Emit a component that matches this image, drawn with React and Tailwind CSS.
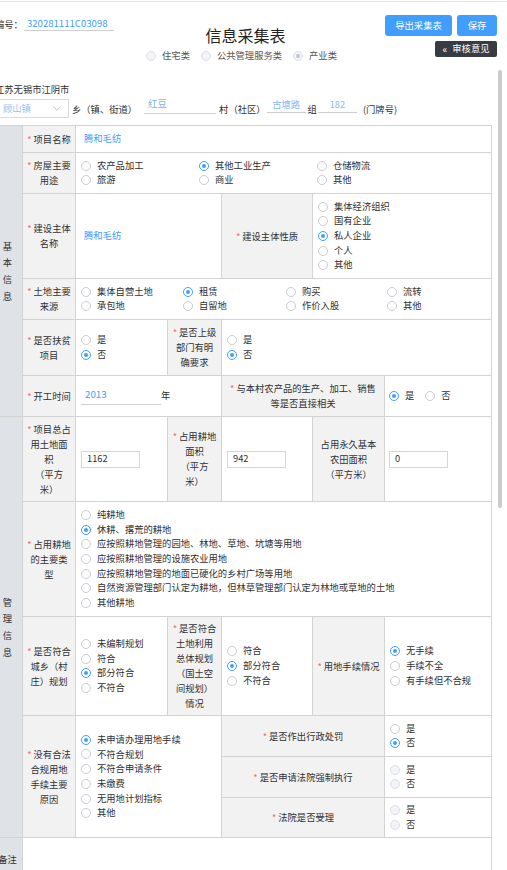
import React from "react";

const B = "border border-[#d3d3d3]";

function Radio({ checked = false, disabled = false, children, className = "" }) {
  let circle;
  if (disabled) {
    circle = "border-[#dcdfe6] bg-[#f2f4f7]";
  } else if (checked) {
    circle = "border-[#409eff] bg-white";
  } else {
    circle = "border-[#c8ccd3] bg-white";
  }
  return (
    <div className={"flex items-center h-[14.7px] whitespace-nowrap " + className}>
      <span className={"w-[10px] h-[10px] rounded-full border flex items-center justify-center shrink-0 " + circle}>
        {checked && (
          <span className={disabled ? "w-[4px] h-[4px] rounded-full bg-[#c0c4cc]" : "w-[4px] h-[4px] rounded-full bg-[#409eff]"} />
        )}
      </span>
      <span className="ml-[6px]">{children}</span>
    </div>
  );
}

const Req = () => <span className="text-[#f56c6c] mr-[2px]">*</span>;

function L({ lines, req = true, colSpan, rowSpan }) {
  return (
    <td
      colSpan={colSpan}
      rowSpan={rowSpan}
      className={B + " bg-[#f2f2f2] text-center align-middle leading-[15px] px-[2px] whitespace-nowrap"}
    >
      {lines.map((l, i) => (
        <div key={i}>
          {i === 0 && req && <Req />}
          {l}
        </div>
      ))}
    </td>
  );
}

function Opts({ items, colSpan, rowSpan, disabled = false }) {
  return (
    <td colSpan={colSpan} rowSpan={rowSpan} className={B + " align-middle pl-[5px] py-[2px]"}>
      {items.map(([t, c], i) => (
        <Radio key={i} checked={c} disabled={disabled}>
          {t}
        </Radio>
      ))}
    </td>
  );
}

function Section({ chars, rowSpan }) {
  return (
    <td rowSpan={rowSpan} className={B + " bg-[#dfe3e8] text-center align-middle"}>
      <div className="flex flex-col items-center leading-[16.7px]">
        {chars.map((c, i) => (
          <div key={i}>{c}</div>
        ))}
      </div>
    </td>
  );
}

function Box({ value }) {
  return (
    <div className="w-[59px] h-[17px] border border-[#d3d6dc] bg-white flex items-center pl-[5px] text-[#303133]">
      {value}
    </div>
  );
}

export default function App() {
  return (
    <div className="relative w-[507px] h-[870px] overflow-hidden bg-white font-['Noto_Sans_CJK_SC','Noto_Sans',sans-serif] text-[9.3px] text-[#303133]">
      <div className="mt-[1px] border-t border-[#e6e6e6]" />
      <div className="ml-[-8px]">
        {/* header */}
        <div className="flex w-[505px] h-[69px]">
          <div className="w-[130px] pt-[15px] pl-[3px] flex items-start">
            <span className="leading-[14px]">编号：</span>
            <span className="inline-block w-[90px] ml-[1px] pl-[3px] border-b border-[#cfcfcf] leading-[13px] text-[#409eff] text-[9.6px]">
              320281111C03098
            </span>
          </div>
          <div className="flex-1 flex flex-col items-center pt-[23px]">
            <div className="text-[16px] leading-[21px] text-[#222]">信息采集表</div>
            <div className="flex items-center mt-[3px] mr-[8px] text-[#555]">
              <Radio disabled className="mr-[11px]">住宅类</Radio>
              <Radio disabled className="mr-[11px]">公共管理服务类</Radio>
              <Radio disabled checked>产业类</Radio>
            </div>
          </div>
          <div className="w-[128px] flex flex-col items-end pt-[13px]">
            <div className="flex gap-[5px]">
              <div className="w-[67px] h-[21px] rounded-[3px] bg-[#409eff] text-white flex items-center justify-center">导出采集表</div>
              <div className="w-[40px] h-[21px] rounded-[3px] bg-[#409eff] text-white flex items-center justify-center">保存</div>
            </div>
            <div className="mt-[5px] w-[62px] h-[16px] rounded-[2px] bg-[#373b42] text-white flex items-center justify-center">
              <span className="mr-[5px] text-[10px] leading-none">«</span>审核意见
            </div>
          </div>
        </div>

        <div className="mt-[11px] pl-[3px] leading-[14px]">江苏无锡市江阴市</div>

        <div className="mt-[3px] flex items-center h-[19px]">
          <div className="w-[77px] h-[19px] border border-[#d6d9de] flex items-center justify-between pl-[10px] pr-[6px] text-[#9bbff0]">
            <span>顾山镇</span>
            <svg width="8" height="5" viewBox="0 0 8 5" className="mr-[1px]">
              <polyline points="0.5,0.5 4,4.3 7.5,0.5" fill="none" stroke="#b8bcc4" strokeWidth="0.9" />
            </svg>
          </div>
          <span className="ml-[3px] mt-[2px]">乡（镇、街道）</span>
          <div className="ml-[7px] w-[72px] h-[17px] border-b border-[#cfcfcf] pl-[4px] text-[#7fb0f0] leading-[13px] self-start mt-[-2px]">
            红豆
          </div>
          <span className="ml-[3px] mt-[2px]">村（社区）</span>
          <div className="ml-[1px] w-[39px] h-[14px] border-b border-[#cfcfcf] text-center text-[#8ab7f2] leading-[11px] self-start">
            古塘路
          </div>
          <span className="ml-[2px] mt-[2px]">组</span>
          <div className="ml-[1px] w-[39px] h-[14px] border-b border-[#cfcfcf] text-center text-[#8ab7f2] leading-[11px] self-start">
            182
          </div>
          <span className="ml-[6px] mt-[2px]">(门牌号)</span>
        </div>

        {/* table */}
        <table className="mt-[7px] table-fixed border-collapse w-[499px]">
          <colgroup>
            <col className="w-[30px]" />
            <col className="w-[53px]" />
            <col className="w-[92px]" />
            <col className="w-[54px]" />
            <col className="w-[91px]" />
            <col className="w-[72px]" />
            <col className="w-[107px]" />
          </colgroup>
          <tbody>
            <tr className="h-[27px]">
              <Section chars={["基", "本", "信", "息"]} rowSpan={6} />
              <L lines={["项目名称"]} />
              <td colSpan={5} className={B + " pl-[8px] text-[#409eff] align-middle"}>腾和毛纺</td>
            </tr>
            <tr className="h-[41px]">
              <L lines={["房屋主要", "用途"]} />
              <td colSpan={5} className={B + " pl-[5px] align-middle"}>
                <div className="grid grid-cols-[118px_118px_118px]">
                  <Radio>农产品加工</Radio>
                  <Radio checked>其他工业生产</Radio>
                  <Radio>仓储物流</Radio>
                  <Radio>旅游</Radio>
                  <Radio>商业</Radio>
                  <Radio>其他</Radio>
                </div>
              </td>
            </tr>
            <tr className="h-[85px]">
              <L lines={["建设主体", "名称"]} />
              <td colSpan={2} className={B + " pl-[8px] text-[#409eff] align-middle"}>腾和毛纺</td>
              <L lines={["建设主体性质"]} />
              <Opts
                colSpan={2}
                items={[
                  ["集体经济组织"],
                  ["国有企业"],
                  ["私人企业", true],
                  ["个人"],
                  ["其他"],
                ]}
              />
            </tr>
            <tr className="h-[41px]">
              <L lines={["土地主要", "来源"]} />
              <td colSpan={5} className={B + " pl-[5px] align-middle"}>
                <div className="grid grid-cols-[102px_103px_101px_100px]">
                  <Radio>集体自营土地</Radio>
                  <Radio checked>租赁</Radio>
                  <Radio>购买</Radio>
                  <Radio>流转</Radio>
                  <Radio>承包地</Radio>
                  <Radio>自留地</Radio>
                  <Radio>作价入股</Radio>
                  <Radio>其他</Radio>
                </div>
              </td>
            </tr>
            <tr className="h-[56px]">
              <L lines={["是否扶贫", "项目"]} />
              <Opts items={[["是"], ["否", true]]} />
              <L lines={["是否上级", "部门有明", "确要求"]} />
              <Opts colSpan={3} items={[["是"], ["否", true]]} />
            </tr>
            <tr className="h-[41px]">
              <L lines={["开工时间"]} />
              <td colSpan={2} className={B + " pl-[5px] align-middle"}>
                <div className="flex items-end">
                  <div className="w-[80px] h-[18px] border-b border-[#cfcfcf] pl-[4px] text-[#409eff] text-[9.8px] leading-[14px]">2013</div>
                  <span className="leading-[14px] mb-[3px]">年</span>
                </div>
              </td>
              <L colSpan={2} lines={["与本村农产品的生产、加工、销售", "等是否直接相关"]} />
              <td className={B + " pl-[4px] align-middle"}>
                <div className="flex items-center">
                  <Radio checked className="mr-[11px]">是</Radio>
                  <Radio>否</Radio>
                </div>
              </td>
            </tr>
            <tr className="h-[85px]">
              <Section chars={["管", "理", "信", "息"]} rowSpan={6} />
              <L lines={["项目总占", "用土地面", "积", "（平方", "米）"]} />
              <td className={B + " pl-[5px] align-middle"}>
                <Box value="1162" />
              </td>
              <L lines={["占用耕地", "面积", "（平方", "米）"]} />
              <td className={B + " pl-[5px] align-middle"}>
                <Box value="942" />
              </td>
              <L req={false} lines={["占用永久基本", "农田面积", "（平方米）"]} />
              <td className={B + " pl-[4px] align-middle"}>
                <Box value="0" />
              </td>
            </tr>
            <tr className="h-[115px]">
              <L lines={["占用耕地", "的主要类", "型"]} />
              <Opts
                colSpan={5}
                items={[
                  ["纯耕地"],
                  ["休耕、撂荒的耕地", true],
                  ["应按照耕地管理的园地、林地、草地、坑塘等用地"],
                  ["应按照耕地管理的设施农业用地"],
                  ["应按照耕地管理的地面已硬化的乡村广场等用地"],
                  ["自然资源管理部门认定为耕地，但林草管理部门认定为林地或草地的土地"],
                  ["其他耕地"],
                ]}
              />
            </tr>
            <tr className="h-[99px]">
              <L lines={["是否符合", "城乡（村", "庄）规划"]} />
              <Opts items={[["未编制规划"], ["符合"], ["部分符合", true], ["不符合"]]} />
              <L lines={["是否符合", "土地利用", "总体规划", "（国土空", "间规划）", "情况"]} />
              <Opts items={[["符合"], ["部分符合", true], ["不符合"]]} />
              <L lines={["用地手续情况"]} />
              <Opts items={[["无手续", true], ["手续不全"], ["有手续但不合规"]]} />
            </tr>
            <tr className="h-[41px]">
              <L rowSpan={3} lines={["没有合法", "合规用地", "手续主要", "原因"]} />
              <Opts
                rowSpan={3}
                colSpan={2}
                items={[
                  ["未申请办理用地手续", true],
                  ["不符合规划"],
                  ["不符合申请条件"],
                  ["未缴费"],
                  ["无用地计划指标"],
                  ["其他"],
                ]}
              />
              <L colSpan={2} lines={["是否作出行政处罚"]} />
              <Opts items={[["是"], ["否", true]]} />
            </tr>
            <tr className="h-[41px]">
              <L colSpan={2} lines={["是否申请法院强制执行"]} />
              <Opts disabled items={[["是"], ["否"]]} />
            </tr>
            <tr className="h-[40px]">
              <L colSpan={2} lines={["法院是否受理"]} />
              <Opts disabled items={[["是"], ["否"]]} />
            </tr>
            <tr className="h-[44px]">
              <td className={B + " bg-[#dfe3e8] text-center align-middle"}>备注</td>
              <td colSpan={6} className={B}></td>
            </tr>
          </tbody>
        </table>
      </div>
      <div className="absolute left-[498px] top-[70px] w-[4px] h-[438px] rounded-[2px] bg-[#cbcbcb]" />
    </div>
  );
}
